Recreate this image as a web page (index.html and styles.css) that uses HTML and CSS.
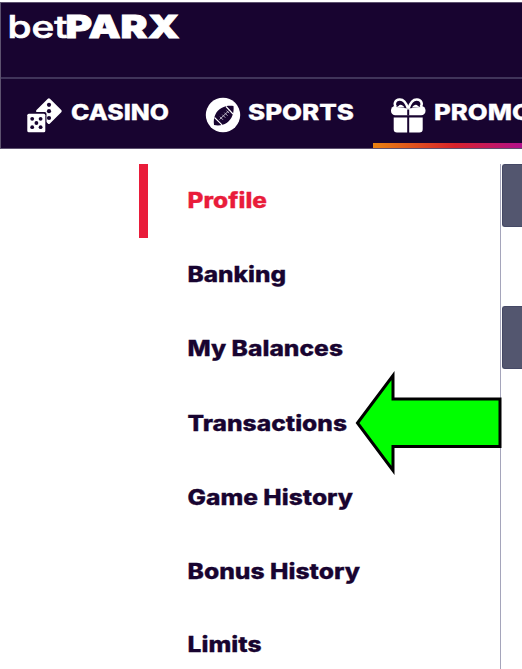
FILE: index.html
```html
<!DOCTYPE html>
<html lang="en">
<head>
<meta charset="utf-8">
<title>betPARX</title>
<link rel="stylesheet" href="styles.css">
</head>
<body>
<header class="header">
  <div class="brand">
    <svg class="logo" width="190" height="46" role="img" aria-label="betPARX">
      <text class="logo-light" x="6.5" y="35" textLength="60" lengthAdjust="spacingAndGlyphs">bet</text>
      <text class="logo-bold" x="64.5" y="35" textLength="114" lengthAdjust="spacingAndGlyphs">PARX</text>
    </svg>
  </div>
  <nav class="nav">
    <a class="tab casino">
      <svg width="36" height="36" viewBox="0 0 36 36">
        <rect x="12.4" y="3.6" width="19" height="19" rx="1.5" transform="rotate(45 21.9 13.1)" fill="#fff"/>
        <g class="ink"><circle cx="22" cy="6.8" r="2.1"/><circle cx="22" cy="13.2" r="2.1"/><circle cx="22" cy="20" r="2.1"/></g>
        <rect x="-1" y="14" width="20.5" height="20.5" rx="2" class="ink"/>
        <rect x="0.3" y="15.7" width="18" height="18.5" rx="1.5" fill="#fff"/>
        <g class="ink"><circle cx="5.2" cy="20.8" r="1.9"/><circle cx="13.6" cy="20.8" r="1.9"/><circle cx="9.4" cy="25" r="1.9"/><circle cx="5.2" cy="29.2" r="1.9"/><circle cx="13.6" cy="29.2" r="1.9"/></g>
      </svg>
      <svg class="label" width="100" height="36"><text x="0" y="22" textLength="98" lengthAdjust="spacingAndGlyphs">CASINO</text></svg>
    </a>
    <a class="tab sports">
      <svg width="36" height="36" viewBox="0 0 36 36">
        <circle cx="17" cy="17" r="17.2" fill="#fff"/>
        <path class="ink" d="M8 27c-1-8 2-14 7.500-17 4-2.300 8-2.400 12-2 .8 7-1.500 13-6.500 16.700C17 27.300 12.500 28 8 27z"/>
        <path d="M20 8.500l7 7.500M8.500 19.500l7.500 7.300" stroke="#fff" stroke-width="1.100" fill="none"/>
        <path d="M13.500 21.500l9-8.500M14 18.800l3 3M16.300 16.700l3 3M18.500 14.700l3 3M20.500 12.600l2.600 2.600" stroke="#bdb6c6" stroke-width="1" fill="none"/>
      </svg>
      <svg class="label" width="108" height="36"><text x="0" y="22" textLength="106" lengthAdjust="spacingAndGlyphs">SPORTS</text></svg>
    </a>
    <a class="tab promo">
      <svg width="36" height="36" viewBox="0 0 36 36">
        <rect x="0" y="8" width="34.500" height="9.300" rx="4.300" fill="#fff"/>
        <path d="M17 10.500C15 4 12 1.300 8.500 1.500 4 1.800 2.500 6 5 9M17.500 10.500C19.500 4 22.500 1.300 26 1.500c4.500.3 6 4.500 3.500 7.500" fill="#180430" stroke="#fff" stroke-width="2.500"/>
        <path d="M5 9.500h8.500c-2-3-4.500-3.500-6-1.500zM29.500 9.500H21c2-3 4.500-3.500 6-1.500z" fill="#fff"/>
        <path d="M2.700 19.500h13.500v15H6a3.300 3.300 0 0 1-3.300-3.300zM18.200 19.500h13.500v11.700a3.300 3.300 0 0 1-3.300 3.300H18.200z" fill="#fff"/>
        <path d="M17.200 11.500v6" stroke="#180430" stroke-width="2"/>
      </svg>
      <svg class="label" width="120" height="36"><text x="0" y="22" textLength="98" lengthAdjust="spacingAndGlyphs">PROMO</text></svg>
    </a>
  </nav>
</header>
<main class="content">
  <nav class="menu">
    <a class="item active"><svg width="190" height="30"><text x="-.5" y="22" textLength="79.500" lengthAdjust="spacingAndGlyphs">Profile</text></svg></a>
    <a class="item"><svg width="190" height="30"><text x="-.5" y="22" textLength="98.500" lengthAdjust="spacingAndGlyphs">Banking</text></svg></a>
    <a class="item"><svg width="190" height="30"><text x="-.5" y="22" textLength="155.500" lengthAdjust="spacingAndGlyphs">My Balances</text></svg></a>
    <a class="item"><svg width="190" height="30"><text x="-.5" y="22.500" textLength="159.500" lengthAdjust="spacingAndGlyphs">Transactions</text></svg></a>
    <a class="item"><svg width="190" height="30"><text x="-.5" y="22.500" textLength="165.500" lengthAdjust="spacingAndGlyphs">Game History</text></svg></a>
    <a class="item"><svg width="190" height="30"><text x="-.5" y="22.500" textLength="172.500" lengthAdjust="spacingAndGlyphs">Bonus History</text></svg></a>
    <a class="item"><svg width="190" height="30"><text x="-.5" y="22" textLength="74" lengthAdjust="spacingAndGlyphs">Limits</text></svg></a>
  </nav>
  <section class="panel">
    <div class="field"></div>
    <div class="field"></div>
  </section>
  <svg class="arrow" width="150" height="104" viewBox="354 371 150 104"><path d="M357.500 423L393 375.500V399H500V446.500H393V470.500Z" fill="#0f0" stroke="#000" stroke-width="3"/></svg>
</main>
</body>
</html>
```
FILE: styles.css
```css
* { box-sizing: border-box; }
body {
  margin: 0;
  height: 669px;
  overflow: hidden;
  background: #fff;
  font-family: Inter, "Liberation Sans", sans-serif;
  padding-top: 2px;
}
svg { display: block; flex: none; overflow: visible; }
.header {
  height: 147px;
  background: #180430;
  border: 1px solid #5d526f;
  border-right: 0;
  overflow: hidden;
}
.brand {
  height: 76px;
  border-bottom: 2px solid #40345a;
}
.logo { fill: #fff; stroke: #fff; }
.logo-light { font-size: 31px; font-weight: 500; stroke-width: .7px; }
.logo-bold { font-size: 32px; font-weight: 900; stroke-width: .8px; }
.nav {
  display: flex;
  height: 69px;
}
.tab {
  display: flex;
  flex: none;
  padding-top: 19px;
  border-bottom: 5px solid transparent;
}
.casino { padding-left: 26px; width: 178px; gap: 8px; }
.sports { padding-left: 27px; width: 194px; gap: 6px; }
.promo {
  padding-left: 18px;
  width: 149px;
  gap: 7px;
  border-image: linear-gradient(90deg, #e98210, #d8222c 55%, #b1108c) 0 0 5 0;
}
.label { fill: #fff; font-size: 21px; font-weight: 800; stroke: #fff; stroke-width: .3px; }
.ink { fill: #180430; }
.content {
  position: relative;
  display: flex;
  height: 520px;
  padding: 15px 0 0 139px;
}
.menu { width: 362px; border-right: 1px solid #a5a5bb; flex: none; }
.item {
  display: flex;
  height: 74px;
  padding: 22px 0 0 40px;
  border-left: 9px solid transparent;
  fill: #180430;
  stroke: #180430;
  stroke-width: .3px;
  font-size: 21px;
  font-weight: 800;
}
.active { border-left-color: #e91c3a; fill: #e91c3a; stroke: #e91c3a; }
.panel { padding-left: 1px; flex: 1; }
.field {
  height: 63px;
  margin-bottom: 79px;
  border: 1px solid #454966;
  border-right: 0;
  border-radius: 3px 0 0 3px;
  background: #53566f;
}
.arrow { position: absolute; left: 354px; top: 222px; stroke-linejoin: miter; }
```
